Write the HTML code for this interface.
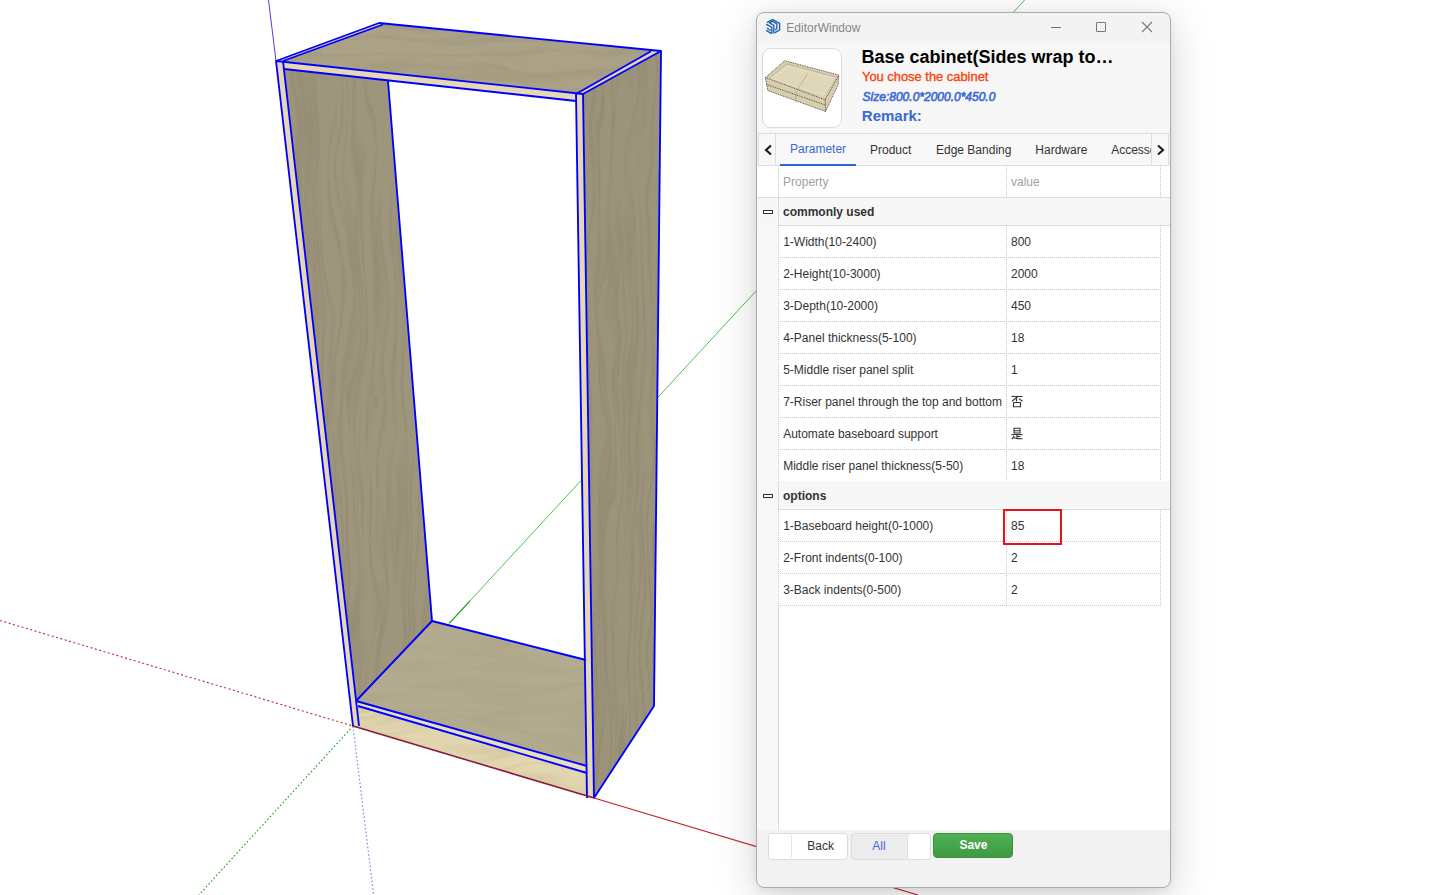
<!DOCTYPE html>
<html><head><meta charset="utf-8">
<style>
*{margin:0;padding:0;box-sizing:border-box}
html,body{width:1450px;height:895px;overflow:hidden;background:#fff;font-family:"Liberation Sans",sans-serif}
.r{position:absolute}
.t{position:absolute;line-height:1;white-space:nowrap}
#scene{position:absolute;left:0;top:0}
</style></head><body>
<svg id="scene" width="1450" height="895" viewBox="0 0 1450 895">
  <defs>
    <filter id="gv" x="0" y="0" width="1" height="1" color-interpolation-filters="sRGB">
      <feTurbulence type="fractalNoise" baseFrequency="0.03 0.008" numOctaves="2" seed="3" result="warp"/>
      <feTurbulence type="turbulence" baseFrequency="0.11 0.004" numOctaves="2" seed="9" result="st"/>
      <feDisplacementMap in="st" in2="warp" scale="26" xChannelSelector="R" yChannelSelector="G" result="d"/>
      <feColorMatrix in="d" type="matrix" values="0 0 0 0 0.40  0 0 0 0 0.36  0 0 0 0 0.27  -3.2 0 0 0 1.0" result="c"/>
      <feComposite in="c" in2="SourceGraphic" operator="in"/>
    </filter>
    <filter id="gh" x="0" y="0" width="1" height="1" color-interpolation-filters="sRGB">
      <feTurbulence type="fractalNoise" baseFrequency="0.008 0.03" numOctaves="2" seed="4" result="warp"/>
      <feTurbulence type="turbulence" baseFrequency="0.004 0.09" numOctaves="2" seed="9" result="st"/>
      <feDisplacementMap in="st" in2="warp" scale="30" xChannelSelector="R" yChannelSelector="G" result="d"/>
      <feColorMatrix in="d" type="matrix" values="0 0 0 0 0.48  0 0 0 0 0.44  0 0 0 0 0.33  -3.0 0 0 0 0.95" result="c"/>
      <feComposite in="c" in2="SourceGraphic" operator="in"/>
    </filter>
    <filter id="gw" x="0" y="0" width="1" height="1" color-interpolation-filters="sRGB">
      <feTurbulence type="fractalNoise" baseFrequency="0.01 0.025" numOctaves="2" seed="6" result="warp"/>
      <feTurbulence type="turbulence" baseFrequency="0.006 0.07" numOctaves="2" seed="11" result="st"/>
      <feDisplacementMap in="st" in2="warp" scale="30" xChannelSelector="R" yChannelSelector="G" result="d"/>
      <feColorMatrix in="d" type="matrix" values="0 0 0 0 0.62  0 0 0 0 0.56  0 0 0 0 0.42  -3.0 0 0 0 0.95" result="c"/>
      <feComposite in="c" in2="SourceGraphic" operator="in"/>
    </filter>
  </defs>
  <!-- axes behind -->
  <line x1="0" y1="620.5" x2="353" y2="726" stroke="#c62828" stroke-width="1.1" stroke-dasharray="2 2.5"/>
  <line x1="353" y1="726" x2="198.8" y2="895" stroke="#22a822" stroke-width="1.2" stroke-dasharray="1.6 2.2"/>
  <line x1="353" y1="726" x2="373.6" y2="895" stroke="#7f7fee" stroke-width="1.1" stroke-dasharray="1.6 2.2"/>
  <line x1="268.5" y1="0" x2="276" y2="61" stroke="#3030d8" stroke-width="0.9"/>
  <line x1="449.2" y1="623.3" x2="1024.7" y2="0" stroke="#4cc44c" stroke-width="1"/>
  <line x1="594" y1="798" x2="918" y2="895" stroke="#c0262c" stroke-width="1.2"/>

  <!-- left panel inner face -->
  <polygon points="283,61 388,81 432,621 356,701" fill="#9e957d"/>
  <polygon points="283,61 388,81 432,621 356,701" fill="#fff" filter="url(#gv)" opacity="0.15"/>
  <!-- top panel top surface -->
  <polygon points="276,61 379,23 661,51 576,94" fill="#aaa186"/>
  <polygon points="276,61 379,23 661,51 576,94" fill="#fff" filter="url(#gh)" opacity="0.15"/>
  <polygon points="576,94 651,51.2 661,51 583,94" fill="#e3d5ad"/>
  <polygon points="276,61 379,23 383,24.5 283,61" fill="#e3d5ad"/>
  <!-- top panel front strip -->
  <polygon points="283,61 576,94 575,101 284,69" fill="#e6d8b2"/>
  <!-- bottom panel top -->
  <polygon points="432,621 586,660 587,766 356,701" fill="#b3ab8f"/>
  <polygon points="432,621 586,660 587,766 356,701" fill="#fff" filter="url(#gw)" opacity="0.16"/>
  <!-- bottom strip -->
  <polygon points="356,701 587,766 587,773 358,706" fill="#e9dfbd"/>
  <!-- baseboard front -->
  <polygon points="358,706 587,773 594,798 353,726" fill="#e2d6b0"/>
  <polygon points="358,706 587,773 594,798 353,726" fill="#fff" filter="url(#gw)" opacity="0.18"/>
  <!-- left front strip -->
  <polygon points="276,61 283,61 359,726 353,726" fill="#e6d8b2"/>
  <!-- right front strip -->
  <polygon points="576,94 583,94 594,798 587,798" fill="#e6d8b2"/>
  <!-- right outer face -->
  <polygon points="583,94 661,51 654,706 594,798" fill="#9c937b"/>
  <polygon points="583,94 661,51 654,706 594,798" fill="#fff" filter="url(#gv)" opacity="0.15"/>

  <!-- white opening -->
  <polygon points="388,81 575,101 585,660 432,621" fill="#fff"/>
  <line x1="449.2" y1="623.3" x2="581" y2="480.5" stroke="#4cc44c" stroke-width="1"/>
  <line x1="449.2" y1="623.3" x2="470" y2="600.8" stroke="#2a9a2a" stroke-width="1.2"/>

  <g stroke="#0000ff" stroke-width="1.85" fill="none" stroke-linejoin="round">
    <polyline points="353,726 276,61 379,23 661,51 654,706 594,798"/>
    <line x1="283" y1="61" x2="383" y2="24.5"/>
    <line x1="576" y1="94" x2="651" y2="51.2"/>
    <line x1="583" y1="94" x2="661" y2="51"/>
    <line x1="276" y1="61" x2="583" y2="94"/>
    <line x1="284" y1="69" x2="576" y2="101"/>
    <line x1="283" y1="61" x2="359" y2="726"/>
    <line x1="576" y1="94" x2="587" y2="798"/>
    <line x1="583" y1="94" x2="594" y2="798"/>
    <line x1="388" y1="81" x2="432" y2="621"/>
    <line x1="432" y1="621" x2="586" y2="660"/>
    <line x1="432" y1="621" x2="356" y2="701"/>
    <line x1="356" y1="701" x2="587" y2="766"/>
    <line x1="358" y1="706" x2="587" y2="773"/>
  </g>
  <line x1="353" y1="726" x2="594" y2="798" stroke="#8a1840" stroke-width="1.6"/>
</svg>

<div class="r" style="left:756px;top:12px;width:415px;height:876px;border:1px solid #acacac;border-radius:8px;z-index:5;pointer-events:none"></div>
<div class="r" style="left:756px;top:12px;width:415px;height:876px;border-radius:8px;box-shadow:0 10px 44px rgba(0,0,0,.17),0 2px 10px rgba(0,0,0,.07);background:#f3f3f3;"></div>
<div class="r" style="left:757px;top:43px;width:413px;height:90px;background:#f7f7f7"></div>
<div class="r" style="left:757px;top:830px;width:413px;height:57px;background:#f2f2f2;border-radius:0 0 7px 7px"></div>
<div class="r" style="left:757px;top:166px;width:413px;height:664px;background:#fff"></div>
<div class="r" style="left:757px;top:197px;width:21px;height:633px;background:#f8f8f8"></div>
<div class="r" style="left:758px;top:133px;width:411px;height:33px;background:#f8f8f8;border:1px solid #dedede"></div>
<div class="r" style="left:775px;top:134px;width:1px;height:31px;background:#dedede"></div>
<div class="r" style="left:1151px;top:134px;width:1px;height:31px;background:#dedede"></div>
<div class="r" style="left:780px;top:164px;width:76px;height:2px;background:#2f66d6"></div>
<svg class="r" style="left:763px;top:143px" width="12" height="14"><polyline points="8,2.5 3,7 8,11.5" fill="none" stroke="#1a1a1a" stroke-width="2.1"/></svg>
<svg class="r" style="left:1155px;top:143px" width="12" height="14"><polyline points="3,2.5 8,7 3,11.5" fill="none" stroke="#1a1a1a" stroke-width="2.1"/></svg>
<svg class="r" style="left:762px;top:16px" width="22" height="22" viewBox="0 0 22 22"><g fill="none" stroke="#1a64ac" stroke-width="1.35" stroke-linejoin="miter" stroke-linecap="butt"><path d="M4.9 6.6 L10.6 3.6 L17.6 7.3 V13.8 L12.6 16.8"/><path d="M7.2 6.6 L10.6 5.3 L14.8 7.9 V12.7 L12.8 14"/><path d="M7.2 6.6 L11.8 9.4 V17.6"/><path d="M4.1 8.1 L9.8 11.3 V17.8"/><path d="M4.9 12.2 L8.9 14.5"/><path d="M4.2 14.3 L9.6 17.6"/></g></svg>
<div class="t" style="left:786.30px;top:21.74px;font-size:12px;color:#858585;font-weight:normal;font-style:normal;">EditorWindow</div>
<div class="r" style="left:1051px;top:27px;width:10px;height:1px;background:#777"></div>
<div class="r" style="left:1096px;top:22px;width:10px;height:10px;border:1px solid #777;border-radius:1px"></div>
<svg class="r" style="left:1141px;top:21px" width="12" height="12"><path d="M1 1 L11 11 M11 1 L1 11" stroke="#777" stroke-width="1.1"/></svg>
<div class="r" style="left:762px;top:48px;width:80px;height:80px;background:#fff;border:1px solid #dcdcdc;border-radius:9px"></div>
<svg class="r" style="left:762px;top:48px" width="80" height="80" viewBox="762 48 80 80">
<polygon points="784.8,60.7 838.8,75.1 838.2,84 825.5,111.5 767.8,90.5 765.4,77.5" fill="#d3c8a6" fill-opacity="0.9"/>
<polygon points="787,64 835.5,77 823.5,96.5 769,78.5" fill="#e3dbc0"/>
<polygon points="790,68 833,79.5 822,94 772,78" fill="#ddd4b6" fill-opacity="0.6"/>
<g fill="none" stroke="#4d4637" stroke-width="1" stroke-dasharray="1 0.8" stroke-opacity="0.9">
<polyline points="765.4,77.5 784.8,60.7 838.8,75.1"/>
<polyline points="765.4,77.5 825.2,99.8 838.8,75.1"/>
<line x1="766.5" y1="84.5" x2="825.2" y2="105"/>
<polyline points="767.8,90.5 825.5,111.5 838.2,84.5 838.8,75.1"/>
<line x1="765.4" y1="77.5" x2="767.8" y2="90.5"/>
<line x1="825.2" y1="99.8" x2="825.5" y2="111.5"/>
</g>
<g fill="none" stroke="#6f6650" stroke-width="0.7" stroke-opacity="0.45">
<polyline points="769,78.5 787,64 835.5,77"/>
<line x1="808" y1="73" x2="796" y2="92"/>
<line x1="796" y1="92" x2="795.8" y2="103"/>
</g>
</svg>
<div class="t" style="left:861.50px;top:47.56px;font-size:18px;color:#000;font-weight:bold;font-style:normal;">Base cabinet(Sides wrap to…</div>
<div class="t" style="left:862.00px;top:70.88px;font-size:12.9px;color:#fb4208;font-weight:normal;font-style:normal;-webkit-text-stroke:0.35px #fb4208">You chose the cabinet</div>
<div class="t" style="left:862.60px;top:90.64px;font-size:12px;color:#3a69d6;font-weight:normal;font-style:italic;-webkit-text-stroke:0.6px #3a69d6">Size:800.0*2000.0*450.0</div>
<div class="t" style="left:861.80px;top:108.20px;font-size:15px;color:#3a69d6;font-weight:bold;font-style:normal;">Remark:</div>
<div class="r" style="left:776px;top:134px;width:375px;height:30px;overflow:hidden"><div class="t" style="left:14.10px;top:8.74px;font-size:12px;color:#3b66d8;font-weight:normal;font-style:normal;">Parameter</div>
<div class="t" style="left:94.00px;top:9.74px;font-size:12px;color:#333;font-weight:normal;font-style:normal;">Product</div>
<div class="t" style="left:160.00px;top:9.74px;font-size:12px;color:#333;font-weight:normal;font-style:normal;">Edge Banding</div>
<div class="t" style="left:259.30px;top:9.74px;font-size:12px;color:#333;font-weight:normal;font-style:normal;">Hardware</div>
<div class="t" style="left:335.20px;top:9.74px;font-size:12px;color:#333;font-weight:normal;font-style:normal;">Accessories</div>
</div>
<div class="t" style="left:783.10px;top:175.64px;font-size:12px;color:#a0a0a0;font-weight:normal;font-style:normal;">Property</div>
<div class="t" style="left:1011.00px;top:175.64px;font-size:12px;color:#a0a0a0;font-weight:normal;font-style:normal;">value</div>
<div class="r" style="left:778px;top:166px;width:1px;height:31px;background-image:linear-gradient(to bottom,#c8c8c8 50%,transparent 50%);background-size:1px 2px"></div>
<div class="r" style="left:1006px;top:166px;width:1px;height:31px;background-image:linear-gradient(to bottom,#c8c8c8 50%,transparent 50%);background-size:1px 2px"></div>
<div class="r" style="left:1160px;top:166px;width:1px;height:31px;background-image:linear-gradient(to bottom,#c8c8c8 50%,transparent 50%);background-size:1px 2px"></div>
<div class="r" style="left:757px;top:197px;width:413px;height:28px;background:#f7f7f7"></div>
<div class="r" style="left:778px;top:197px;width:1px;height:28px;background:#dcdcdc"></div>
<div class="r" style="left:778px;top:225px;width:392px;height:1px;background:#dcdcdc"></div>
<div class="r" style="left:763px;top:210px;width:10px;height:4px;border:1.3px solid #333"></div>
<div class="t" style="left:783.00px;top:205.54px;font-size:12px;color:#333;font-weight:bold;font-style:normal;">commonly used</div>
<div class="r" style="left:778px;top:225px;width:1px;height:32px;background-image:linear-gradient(to bottom,#c8c8c8 50%,transparent 50%);background-size:1px 2px"></div>
<div class="r" style="left:1006px;top:225px;width:1px;height:32px;background-image:linear-gradient(to bottom,#c8c8c8 50%,transparent 50%);background-size:1px 2px"></div>
<div class="r" style="left:1160px;top:225px;width:1px;height:32px;background-image:linear-gradient(to bottom,#c8c8c8 50%,transparent 50%);background-size:1px 2px"></div>
<div class="r" style="left:778px;top:257px;width:383px;height:1px;background-image:linear-gradient(to right,#c8c8c8 50%,transparent 50%);background-size:2px 1px"></div>
<div class="t" style="left:783.20px;top:236.04px;font-size:12px;color:#333;font-weight:normal;font-style:normal;">1-Width(10-2400)</div>
<div class="t" style="left:1011.00px;top:236.04px;font-size:12px;color:#333;font-weight:normal;font-style:normal;">800</div>
<div class="r" style="left:778px;top:257px;width:1px;height:32px;background-image:linear-gradient(to bottom,#c8c8c8 50%,transparent 50%);background-size:1px 2px"></div>
<div class="r" style="left:1006px;top:257px;width:1px;height:32px;background-image:linear-gradient(to bottom,#c8c8c8 50%,transparent 50%);background-size:1px 2px"></div>
<div class="r" style="left:1160px;top:257px;width:1px;height:32px;background-image:linear-gradient(to bottom,#c8c8c8 50%,transparent 50%);background-size:1px 2px"></div>
<div class="r" style="left:778px;top:289px;width:383px;height:1px;background-image:linear-gradient(to right,#c8c8c8 50%,transparent 50%);background-size:2px 1px"></div>
<div class="t" style="left:783.20px;top:268.04px;font-size:12px;color:#333;font-weight:normal;font-style:normal;">2-Height(10-3000)</div>
<div class="t" style="left:1011.00px;top:268.04px;font-size:12px;color:#333;font-weight:normal;font-style:normal;">2000</div>
<div class="r" style="left:778px;top:289px;width:1px;height:32px;background-image:linear-gradient(to bottom,#c8c8c8 50%,transparent 50%);background-size:1px 2px"></div>
<div class="r" style="left:1006px;top:289px;width:1px;height:32px;background-image:linear-gradient(to bottom,#c8c8c8 50%,transparent 50%);background-size:1px 2px"></div>
<div class="r" style="left:1160px;top:289px;width:1px;height:32px;background-image:linear-gradient(to bottom,#c8c8c8 50%,transparent 50%);background-size:1px 2px"></div>
<div class="r" style="left:778px;top:321px;width:383px;height:1px;background-image:linear-gradient(to right,#c8c8c8 50%,transparent 50%);background-size:2px 1px"></div>
<div class="t" style="left:783.20px;top:300.04px;font-size:12px;color:#333;font-weight:normal;font-style:normal;">3-Depth(10-2000)</div>
<div class="t" style="left:1011.00px;top:300.04px;font-size:12px;color:#333;font-weight:normal;font-style:normal;">450</div>
<div class="r" style="left:778px;top:321px;width:1px;height:32px;background-image:linear-gradient(to bottom,#c8c8c8 50%,transparent 50%);background-size:1px 2px"></div>
<div class="r" style="left:1006px;top:321px;width:1px;height:32px;background-image:linear-gradient(to bottom,#c8c8c8 50%,transparent 50%);background-size:1px 2px"></div>
<div class="r" style="left:1160px;top:321px;width:1px;height:32px;background-image:linear-gradient(to bottom,#c8c8c8 50%,transparent 50%);background-size:1px 2px"></div>
<div class="r" style="left:778px;top:353px;width:383px;height:1px;background-image:linear-gradient(to right,#c8c8c8 50%,transparent 50%);background-size:2px 1px"></div>
<div class="t" style="left:783.20px;top:332.04px;font-size:12px;color:#333;font-weight:normal;font-style:normal;">4-Panel thickness(5-100)</div>
<div class="t" style="left:1011.00px;top:332.04px;font-size:12px;color:#333;font-weight:normal;font-style:normal;">18</div>
<div class="r" style="left:778px;top:353px;width:1px;height:32px;background-image:linear-gradient(to bottom,#c8c8c8 50%,transparent 50%);background-size:1px 2px"></div>
<div class="r" style="left:1006px;top:353px;width:1px;height:32px;background-image:linear-gradient(to bottom,#c8c8c8 50%,transparent 50%);background-size:1px 2px"></div>
<div class="r" style="left:1160px;top:353px;width:1px;height:32px;background-image:linear-gradient(to bottom,#c8c8c8 50%,transparent 50%);background-size:1px 2px"></div>
<div class="r" style="left:778px;top:385px;width:383px;height:1px;background-image:linear-gradient(to right,#c8c8c8 50%,transparent 50%);background-size:2px 1px"></div>
<div class="t" style="left:783.20px;top:364.04px;font-size:12px;color:#333;font-weight:normal;font-style:normal;">5-Middle riser panel split</div>
<div class="t" style="left:1011.00px;top:364.04px;font-size:12px;color:#333;font-weight:normal;font-style:normal;">1</div>
<div class="r" style="left:778px;top:385px;width:1px;height:32px;background-image:linear-gradient(to bottom,#c8c8c8 50%,transparent 50%);background-size:1px 2px"></div>
<div class="r" style="left:1006px;top:385px;width:1px;height:32px;background-image:linear-gradient(to bottom,#c8c8c8 50%,transparent 50%);background-size:1px 2px"></div>
<div class="r" style="left:1160px;top:385px;width:1px;height:32px;background-image:linear-gradient(to bottom,#c8c8c8 50%,transparent 50%);background-size:1px 2px"></div>
<div class="r" style="left:778px;top:417px;width:383px;height:1px;background-image:linear-gradient(to right,#c8c8c8 50%,transparent 50%);background-size:2px 1px"></div>
<div class="t" style="left:783.20px;top:396.04px;font-size:12px;color:#333;font-weight:normal;font-style:normal;">7-Riser panel through the top and bottom</div>
<svg class="r" style="left:1010px;top:395px" width="14" height="13" viewBox="0 0 14 13"><g fill="none" stroke="#333" stroke-width="1.1"><path d="M1.5 1.5 H12.5"/><path d="M8 1.5 L2 6.2"/><path d="M6.5 3.2 V6.5"/><path d="M9 3.8 L12.5 6.2"/><path d="M3.5 7.5 V11.8 H10.5 V7.5 H3.5"/></g></svg><div class="r" style="left:778px;top:417px;width:1px;height:32px;background-image:linear-gradient(to bottom,#c8c8c8 50%,transparent 50%);background-size:1px 2px"></div>
<div class="r" style="left:1006px;top:417px;width:1px;height:32px;background-image:linear-gradient(to bottom,#c8c8c8 50%,transparent 50%);background-size:1px 2px"></div>
<div class="r" style="left:1160px;top:417px;width:1px;height:32px;background-image:linear-gradient(to bottom,#c8c8c8 50%,transparent 50%);background-size:1px 2px"></div>
<div class="r" style="left:778px;top:449px;width:383px;height:1px;background-image:linear-gradient(to right,#c8c8c8 50%,transparent 50%);background-size:2px 1px"></div>
<div class="t" style="left:783.20px;top:428.04px;font-size:12px;color:#333;font-weight:normal;font-style:normal;">Automate baseboard support</div>
<svg class="r" style="left:1010px;top:427px" width="14" height="13" viewBox="0 0 14 13"><g fill="none" stroke="#333" stroke-width="1.1"><path d="M4 1.3 H10 V6 H4 Z M4 3.7 H10"/><path d="M1.5 7.6 H12.5"/><path d="M7 7.6 V11.5 M7 9.5 H10.5"/><path d="M4 9 Q3.5 11 1.8 12"/><path d="M4 10.5 Q6 12 12.5 11.8"/></g></svg><div class="r" style="left:778px;top:449px;width:1px;height:32px;background-image:linear-gradient(to bottom,#c8c8c8 50%,transparent 50%);background-size:1px 2px"></div>
<div class="r" style="left:1006px;top:449px;width:1px;height:32px;background-image:linear-gradient(to bottom,#c8c8c8 50%,transparent 50%);background-size:1px 2px"></div>
<div class="r" style="left:1160px;top:449px;width:1px;height:32px;background-image:linear-gradient(to bottom,#c8c8c8 50%,transparent 50%);background-size:1px 2px"></div>
<div class="r" style="left:778px;top:481px;width:383px;height:1px;background-image:linear-gradient(to right,#c8c8c8 50%,transparent 50%);background-size:2px 1px"></div>
<div class="t" style="left:783.20px;top:460.04px;font-size:12px;color:#333;font-weight:normal;font-style:normal;">Middle riser panel thickness(5-50)</div>
<div class="t" style="left:1011.00px;top:460.04px;font-size:12px;color:#333;font-weight:normal;font-style:normal;">18</div>
<div class="r" style="left:757px;top:481px;width:413px;height:28px;background:#f7f7f7"></div>
<div class="r" style="left:778px;top:481px;width:1px;height:28px;background:#dcdcdc"></div>
<div class="r" style="left:778px;top:509px;width:392px;height:1px;background:#dcdcdc"></div>
<div class="r" style="left:763px;top:494px;width:10px;height:4px;border:1.3px solid #333"></div>
<div class="t" style="left:783.00px;top:489.54px;font-size:12px;color:#333;font-weight:bold;font-style:normal;">options</div>
<div class="r" style="left:778px;top:509px;width:1px;height:32px;background-image:linear-gradient(to bottom,#c8c8c8 50%,transparent 50%);background-size:1px 2px"></div>
<div class="r" style="left:1006px;top:509px;width:1px;height:32px;background-image:linear-gradient(to bottom,#c8c8c8 50%,transparent 50%);background-size:1px 2px"></div>
<div class="r" style="left:1160px;top:509px;width:1px;height:32px;background-image:linear-gradient(to bottom,#c8c8c8 50%,transparent 50%);background-size:1px 2px"></div>
<div class="r" style="left:778px;top:541px;width:383px;height:1px;background-image:linear-gradient(to right,#c8c8c8 50%,transparent 50%);background-size:2px 1px"></div>
<div class="t" style="left:783.20px;top:520.04px;font-size:12px;color:#333;font-weight:normal;font-style:normal;">1-Baseboard height(0-1000)</div>
<div class="t" style="left:1011.00px;top:520.04px;font-size:12px;color:#333;font-weight:normal;font-style:normal;">85</div>
<div class="r" style="left:778px;top:541px;width:1px;height:32px;background-image:linear-gradient(to bottom,#c8c8c8 50%,transparent 50%);background-size:1px 2px"></div>
<div class="r" style="left:1006px;top:541px;width:1px;height:32px;background-image:linear-gradient(to bottom,#c8c8c8 50%,transparent 50%);background-size:1px 2px"></div>
<div class="r" style="left:1160px;top:541px;width:1px;height:32px;background-image:linear-gradient(to bottom,#c8c8c8 50%,transparent 50%);background-size:1px 2px"></div>
<div class="r" style="left:778px;top:573px;width:383px;height:1px;background-image:linear-gradient(to right,#c8c8c8 50%,transparent 50%);background-size:2px 1px"></div>
<div class="t" style="left:783.20px;top:552.04px;font-size:12px;color:#333;font-weight:normal;font-style:normal;">2-Front indents(0-100)</div>
<div class="t" style="left:1011.00px;top:552.04px;font-size:12px;color:#333;font-weight:normal;font-style:normal;">2</div>
<div class="r" style="left:778px;top:573px;width:1px;height:32px;background-image:linear-gradient(to bottom,#c8c8c8 50%,transparent 50%);background-size:1px 2px"></div>
<div class="r" style="left:1006px;top:573px;width:1px;height:32px;background-image:linear-gradient(to bottom,#c8c8c8 50%,transparent 50%);background-size:1px 2px"></div>
<div class="r" style="left:1160px;top:573px;width:1px;height:32px;background-image:linear-gradient(to bottom,#c8c8c8 50%,transparent 50%);background-size:1px 2px"></div>
<div class="r" style="left:778px;top:605px;width:383px;height:1px;background-image:linear-gradient(to right,#c8c8c8 50%,transparent 50%);background-size:2px 1px"></div>
<div class="t" style="left:783.20px;top:584.04px;font-size:12px;color:#333;font-weight:normal;font-style:normal;">3-Back indents(0-500)</div>
<div class="t" style="left:1011.00px;top:584.04px;font-size:12px;color:#333;font-weight:normal;font-style:normal;">2</div>
<div class="r" style="left:757px;top:197px;width:413px;height:1px;background:#dcdcdc"></div>
<div class="r" style="left:778px;top:606px;width:1px;height:224px;background:#dcdcdc"></div>
<div class="r" style="left:1003px;top:509px;width:59px;height:36px;border:2px solid #e3141b"></div>
<div class="r" style="left:768px;top:833px;width:80px;height:27px;background:#fff;border:1px solid #dcdcdc;border-radius:4px"></div>
<div class="r" style="left:769px;top:834px;width:23px;height:25px;background:#fff;border-right:1px solid #e6e6e6;border-radius:3px"></div>
<div class="t" style="left:807.30px;top:840.14px;font-size:12px;color:#333;font-weight:normal;font-style:normal;">Back</div>
<div class="r" style="left:851px;top:833px;width:80px;height:27px;background:#ececec;border:1px solid #dcdcdc;border-radius:4px"></div>
<div class="r" style="left:907px;top:834px;width:23px;height:25px;background:#fff;border-left:1px solid #e0e0e0;border-radius:3px"></div>
<div class="t" style="left:872.30px;top:840.14px;font-size:12px;color:#5466d8;font-weight:normal;font-style:normal;">All</div>
<div class="r" style="left:933px;top:833px;width:80px;height:25px;background:linear-gradient(#50b055,#3e9a43);border:1px solid #3a9140;border-radius:4px"></div>
<div class="t" style="left:959.40px;top:839.14px;font-size:12px;color:#fff;font-weight:bold;font-style:normal;">Save</div>

</body></html>
